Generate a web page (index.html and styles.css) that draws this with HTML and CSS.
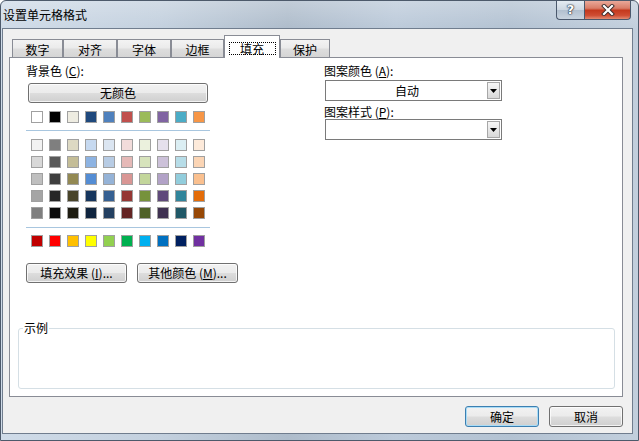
FILE: index.html
```html
<!DOCTYPE html>
<html lang="zh-CN">
<head>
<meta charset="utf-8">
<title>设置单元格格式</title>
<link rel="stylesheet" href="styles.css">
</head>
<body>
<div class="window">
  <div class="titlebar">
    <span class="title">设置单元格格式</span>
    <div class="caption-btns">
      <div class="cbtn help">?</div>
      <div class="cbtn close">
        <svg width="14" height="12" viewBox="0 0 14 12"><path d="M3 2 L11 10 M11 2 L3 10" stroke="#3a2a2a" stroke-width="4" stroke-linecap="square" fill="none"/><path d="M3 2 L11 10 M11 2 L3 10" stroke="#fff" stroke-width="2.2" stroke-linecap="square" fill="none"/></svg>
      </div>
    </div>
  </div>
  <div class="client">
    <div class="tabs">
      <div class="tab t1">数字</div>
      <div class="tab t2">对齐</div>
      <div class="tab t3">字体</div>
      <div class="tab t4">边框</div>
      <div class="tab active"><span class="focus">填充</span></div>
      <div class="tab t6">保护</div>
    </div>
    <div class="panel">
      <div class="top">
        <div class="left">
          <div class="lbl">背景色 (<u>C</u>):</div>
          <div class="btn nocolor">无颜色</div>
          <div class="swatches row-first">
            <span class="sw" style="background:#FFFFFF"></span><span class="sw" style="background:#000000"></span><span class="sw" style="background:#EEECE1"></span><span class="sw" style="background:#1F497D"></span><span class="sw" style="background:#4F81BD"></span><span class="sw" style="background:#C0504D"></span><span class="sw" style="background:#9BBB59"></span><span class="sw" style="background:#8064A2"></span><span class="sw" style="background:#4BACC6"></span><span class="sw" style="background:#F79646"></span>
          </div>
          <div class="sep"></div>
          <div class="swatches grid">
            <span class="sw" style="background:#F2F2F2"></span><span class="sw" style="background:#7F7F7F"></span><span class="sw" style="background:#DDD9C3"></span><span class="sw" style="background:#C6D9F0"></span><span class="sw" style="background:#DBE5F1"></span><span class="sw" style="background:#F2DCDB"></span><span class="sw" style="background:#EBF1DD"></span><span class="sw" style="background:#E5E0EC"></span><span class="sw" style="background:#DBEEF3"></span><span class="sw" style="background:#FDEADA"></span>
            <span class="sw" style="background:#D8D8D8"></span><span class="sw" style="background:#595959"></span><span class="sw" style="background:#C4BD97"></span><span class="sw" style="background:#8DB3E2"></span><span class="sw" style="background:#B8CCE4"></span><span class="sw" style="background:#E5B9B7"></span><span class="sw" style="background:#D7E3BC"></span><span class="sw" style="background:#CCC1D9"></span><span class="sw" style="background:#B7DDE8"></span><span class="sw" style="background:#FBD5B5"></span>
            <span class="sw" style="background:#BFBFBF"></span><span class="sw" style="background:#3F3F3F"></span><span class="sw" style="background:#938953"></span><span class="sw" style="background:#548DD4"></span><span class="sw" style="background:#95B3D7"></span><span class="sw" style="background:#D99694"></span><span class="sw" style="background:#C3D69B"></span><span class="sw" style="background:#B2A2C7"></span><span class="sw" style="background:#92CDDC"></span><span class="sw" style="background:#FAC08F"></span>
            <span class="sw" style="background:#A5A5A5"></span><span class="sw" style="background:#262626"></span><span class="sw" style="background:#494429"></span><span class="sw" style="background:#17365D"></span><span class="sw" style="background:#366092"></span><span class="sw" style="background:#953734"></span><span class="sw" style="background:#76923C"></span><span class="sw" style="background:#5F497A"></span><span class="sw" style="background:#31859B"></span><span class="sw" style="background:#E36C09"></span>
            <span class="sw" style="background:#7F7F7F"></span><span class="sw" style="background:#0C0C0C"></span><span class="sw" style="background:#1D1B10"></span><span class="sw" style="background:#0F243E"></span><span class="sw" style="background:#244061"></span><span class="sw" style="background:#632423"></span><span class="sw" style="background:#4F6128"></span><span class="sw" style="background:#3F3151"></span><span class="sw" style="background:#205867"></span><span class="sw" style="background:#974806"></span>
          </div>
          <div class="sep sep2"></div>
          <div class="swatches row-std">
            <span class="sw" style="background:#C00000"></span><span class="sw" style="background:#FF0000"></span><span class="sw" style="background:#FFC000"></span><span class="sw" style="background:#FFFF00"></span><span class="sw" style="background:#92D050"></span><span class="sw" style="background:#00B050"></span><span class="sw" style="background:#00B0F0"></span><span class="sw" style="background:#0070C0"></span><span class="sw" style="background:#002060"></span><span class="sw" style="background:#7030A0"></span>
          </div>
        </div>
        <div class="right">
          <div class="lbl">图案颜色 (<u>A</u>):</div>
          <div class="combo">
            <span class="combo-text">自动</span>
            <span class="arrow"><svg width="7" height="4" viewBox="0 0 7 4"><path d="M0 0 H7 L3.5 4 Z" fill="#000"/></svg></span>
          </div>
          <div class="lbl lbl2">图案样式 (<u>P</u>):</div>
          <div class="combo">
            <span class="combo-text"></span>
            <span class="arrow"><svg width="7" height="4" viewBox="0 0 7 4"><path d="M0 0 H7 L3.5 4 Z" fill="#000"/></svg></span>
          </div>
        </div>
      </div>
      <div class="actions">
        <div class="btn small">填充效果 (<u>I</u>)...</div>
        <div class="btn small">其他颜色 (<u>M</u>)...</div>
      </div>
      <div class="group"><span class="group-label">示例</span></div>
    </div>
    <div class="footer">
      <div class="btn dlg default">确定</div>
      <div class="btn dlg">取消</div>
    </div>
  </div>
</div>
</body>
</html>
```
FILE: styles.css
```css
* { box-sizing: border-box; }

html, body {
  margin: 0;
  padding: 0;
  background: #ffffff;
}

body {
  font-family: "Noto Sans CJK SC", "Liberation Sans", sans-serif;
  font-size: 12px;
  line-height: 14px;
  color: #000;
}

u { text-decoration: underline; text-underline-offset: 1px; }

.window {
  width: 639px;
  height: 441px;
  border: 1px solid #4d5a6b;
  border-radius: 6px 6px 0 0;
  background:
    linear-gradient(to bottom, rgba(255,255,255,0.25), rgba(255,255,255,0) 28px),
    linear-gradient(to right, #cfdbe8 0%, #c3d0de 25%, #aebccb 45%, #bccada 62%, #b3c2d2 80%, #c2cfdd 100%);
  display: flex;
  flex-direction: column;
  padding: 0 5px 6px 1px;
  overflow: hidden;
}

.titlebar {
  height: 27px;
  display: flex;
  align-items: flex-start;
  flex: none;
}

.title {
  margin: 7px 0 0 1px;
  color: #000;
}

.caption-btns {
  margin-left: auto;
  margin-right: 2px;
  display: flex;
}

.cbtn {
  height: 19px;
  border: 1px solid #4a586c;
  border-top: none;
  display: flex;
  align-items: center;
  justify-content: center;
}

.help {
  width: 28px;
  border-right: none;
  border-radius: 0 0 0 4px;
  background: linear-gradient(to bottom, #e4ebf2 0%, #cdd7e2 48%, #b2c0cf 52%, #c9d4df 100%);
  color: #fff;
  font-family: "DejaVu Sans", sans-serif;
  font-weight: bold;
  font-size: 13px;
  line-height: 18px;
  text-shadow: 0 0 1px #1e2a3a, 0 0 1px #1e2a3a, 0 0 2px #1e2a3a;
}

.close {
  width: 47px;
  border-radius: 0 0 4px 0;
  background: linear-gradient(to bottom, #eaa899 0%, #d97d68 40%, #c4391e 52%, #cf4d33 80%, #e28b72 100%);
}

.client {
  flex: 1;
  border: 1px solid #707d8e;
  background: #f0f0f0;
  padding: 6px 9px 0 6px;
  display: flex;
  flex-direction: column;
}

/* Tabs */
.tabs {
  height: 22px;
  display: flex;
  align-items: flex-end;
  padding-left: 3px;
  flex: none;
}

.tab {
  height: 18px;
  border: 1px solid #898c95;
  border-bottom: none;
  background: linear-gradient(to bottom, #f3f3f3 0%, #ebebeb 45%, #dddddd 55%, #d5d5d5 100%);
  text-align: center;
  padding-top: 3px;
  line-height: 14px;
}
.t1 { width: 51px; }
.t2 { width: 54px; }
.t3 { width: 54px; }
.t4 { width: 53px; }
.t6 { width: 50px; }

.tab.active {
  width: 56px;
  height: 23px;
  margin-bottom: -1px;
  background: #ffffff;
  padding-top: 6px;
  position: relative;
  z-index: 1;
}

.focus {
  display: block;
  width: 47px;
  height: 13px;
  margin: 0 auto;
  border: 1px dotted #000;
  line-height: 11px;
}

/* Panel */
.panel {
  height: 340px;
  flex: none;
  border: 1px solid #898c95;
  background: #ffffff;
  padding: 6px 0 0 16px;
  display: flex;
  flex-direction: column;
}

.top {
  display: flex;
}

.left {
  width: 298px;
  display: flex;
  flex-direction: column;
  align-items: flex-start;
}

.right {
  width: 178px;
  display: flex;
  flex-direction: column;
  align-items: flex-start;
}

.lbl { height: 14px; white-space: nowrap; }

.btn {
  border: 1px solid #707070;
  border-radius: 3px;
  background: linear-gradient(to bottom, #f2f2f2 0%, #ebebeb 49%, #dddddd 51%, #cfcfcf 100%);
  box-shadow: inset 0 0 0 1px rgba(255,255,255,0.75);
  text-align: center;
  white-space: nowrap;
}

.nocolor {
  margin-top: 5px;
  margin-left: 2px;
  width: 180px;
  height: 20px;
  line-height: 18px;
}

.swatches {
  display: grid;
  grid-template-columns: repeat(10, 12px);
  column-gap: 6px;
  row-gap: 5px;
  padding-left: 5px;
}

.sw {
  width: 12px;
  height: 12px;
  border: 1px solid #a0a0a0;
}

.row-first { margin-top: 8px; }

.sep {
  margin-top: 7px;
  width: 184px;
  height: 1px;
  background: #a8c6df;
}

.grid { margin-top: 8px; }
.sep2 { margin-top: 8px; }
.row-std { margin-top: 7px; }

.combo {
  margin-left: 1px;
  width: 177px;
  height: 21px;
  border: 1px solid #7a7a7a;
  background: #fff;
  padding: 1px;
  display: flex;
}

.right .combo { margin-top: 2px; }
.right .lbl2 { margin-top: 4px; }
.right .lbl2 + .combo { margin-top: 0; }

.combo-text {
  flex: 1;
  text-align: center;
  line-height: 17px;
}

.arrow {
  width: 13px;
  height: 17px;
  border: 1px solid #a7a7a7;
  background: linear-gradient(to bottom, #f6f6f6 0%, #e8e8e8 50%, #d8d8d8 100%);
  display: flex;
  align-items: center;
  justify-content: center;
}

.actions {
  margin-top: 16px;
  display: flex;
  gap: 10px;
}

.small {
  width: 101px;
  height: 20px;
  line-height: 18px;
}

.group {
  position: relative;
  margin-top: 45px;
  margin-left: -8px;
  width: 597px;
  height: 61px;
  border: 1px solid #d5dfe5;
  border-radius: 3px;
}

.group-label {
  position: absolute;
  top: -8px;
  left: 4px;
  padding: 0 1px;
  background: #fff;
  line-height: 14px;
}

/* Footer */
.footer {
  margin-top: 9px;
  display: flex;
  justify-content: flex-end;
  gap: 10px;
}

.dlg {
  width: 74px;
  height: 21px;
  line-height: 19px;
}

.dlg.default {
  border-color: #3c7fb1;
  box-shadow: inset 0 0 0 1px #a9dcf6;
}
```
